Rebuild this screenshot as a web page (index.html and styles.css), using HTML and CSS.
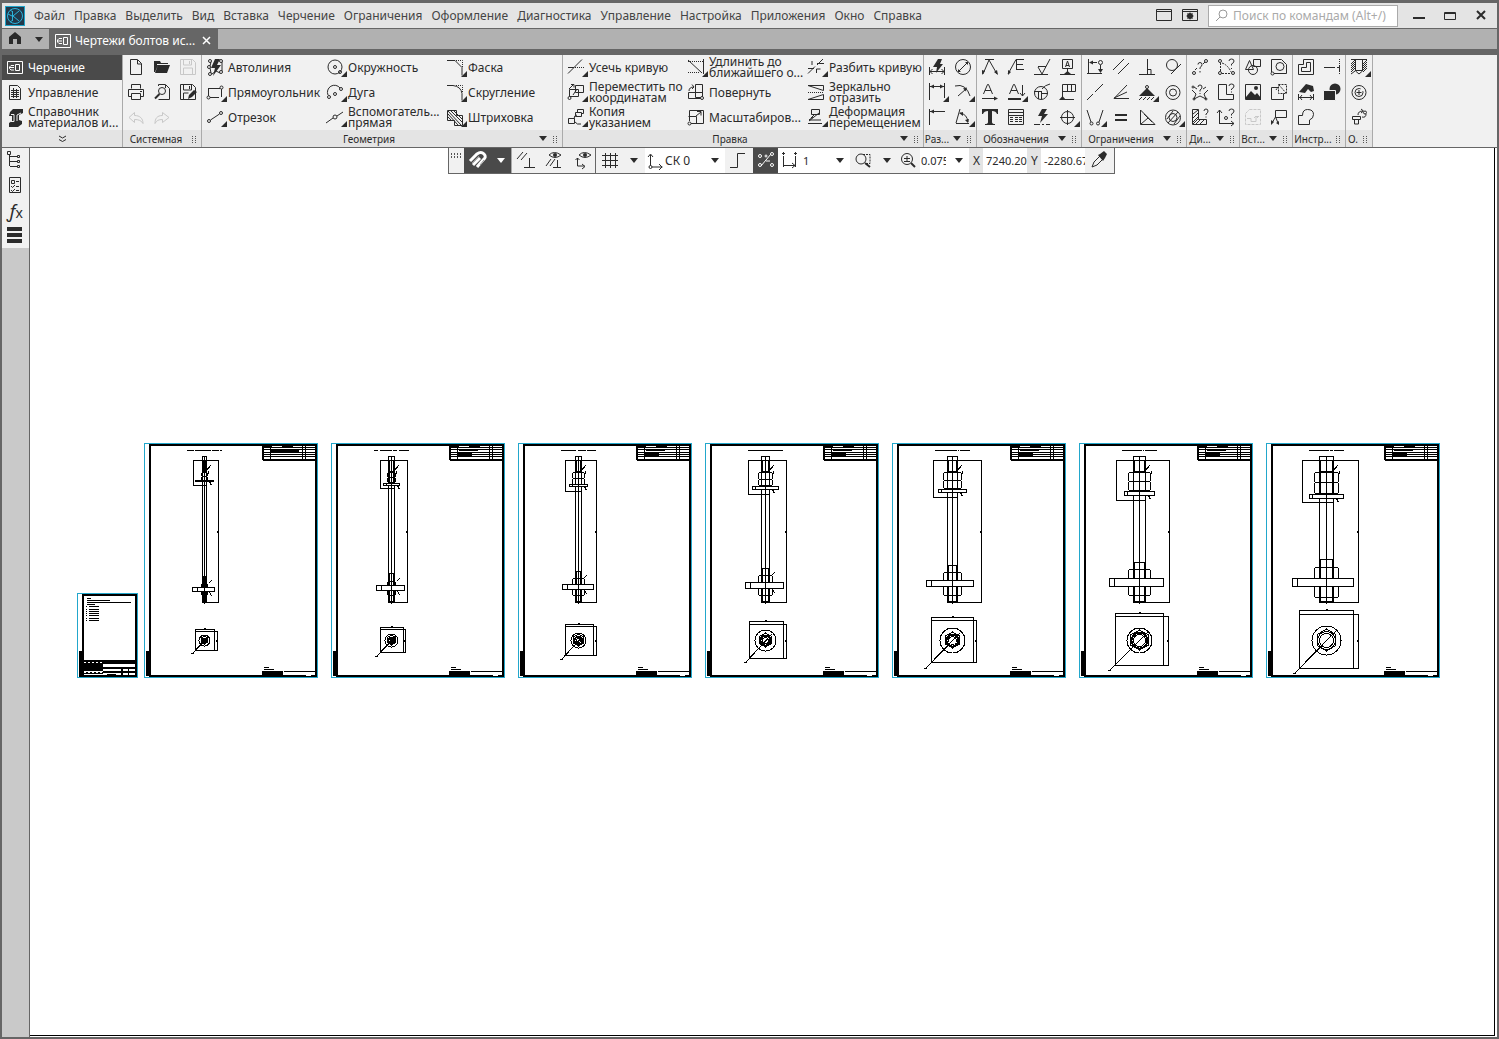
FILE: index.html
```html
<!DOCTYPE html>
<html lang="ru">
<head>
<meta charset="utf-8">
<title>Чертежи болтов</title>
<link rel="stylesheet" href="styles.css">
</head>
<body>
<div class="app">
<header class="menubar">
  <svg class="logo" width="20" height="20" viewBox="0 0 20 20"><path d="M0 0h20v20H0z" fill="#1fa3c8"/><path d="M1 1h18v18H1z" fill="#22384a"/><g fill="none" stroke="#2bb4dc"><circle cx="10" cy="10" r="7.5"/><path d="M7.500 5v10M8 10l6-5M8 10l6 5M3 8l4 2M5 4l3 2M5 16l3-2" /></g></svg>
  <nav class="menu">
    <button>Файл</button><button>Правка</button><button>Выделить</button><button>Вид</button><button>Вставка</button><button>Черчение</button><button>Ограничения</button><button>Оформление</button><button>Диагностика</button><button>Управление</button><button>Настройка</button><button>Приложения</button><button>Окно</button><button>Справка</button>
  </nav>
  <div class="menubar-right">
    <button class="ic" aria-label="Экран"><svg viewBox="0 0 26 25"><path d="M5.500 6.500h15v11h-15zM5 8.500h16"/></svg></button>
    <button class="ic" aria-label="Настройка экрана"><svg viewBox="0 0 26 25"><path d="M5.500 6.500h15v11h-15zM5 8.500h16"/><circle cx="13" cy="13" r="2" stroke-width="2"/><path d="M13 9.500v7M9.500 13h7M10.500 10.500l5 5M15.500 10.500l-5 5"/></svg></button>
    <label class="search"><svg width="14" height="14" viewBox="0 0 14 14"><circle cx="8" cy="5" r="4"/><path d="M5 8l-4 4"/></svg><input type="text" placeholder="Поиск по командам (Alt+/)" aria-label="Поиск по командам"></label>
    <button class="win" aria-label="Свернуть"><svg viewBox="0 0 26 25"><path d="M7 15h12" stroke-width="2"/></svg></button>
    <button class="win" aria-label="Развернуть"><svg viewBox="0 0 26 25"><path d="M7.500 9.500h11v7h-11zM7 10.500h12"/></svg></button>
    <button class="win" aria-label="Закрыть"><svg viewBox="0 0 26 25"><path d="M9 8l8 8M17 8l-8 8" stroke-width="2"/></svg></button>
  </div>
</header>
<div class="tabs">
  <button class="home" aria-label="Главная"><svg viewBox="0 0 26 20"><path class="f" d="M7 8l6-5 6 5v7h-4v-5h-4v5H7z"/></svg></button>
  <button class="home-more" aria-label="Список"><i class="arrow"></i></button>
  <div class="tab">
    <svg width="16" height="14" viewBox="0 0 16 14"><path d="M.5.500h15v13H.5zM7 4.500H4L2.500 6v2L4 9.500h3M3 7h4M8.500 3.500h4v7h-4z"/></svg>
    <span>Чертежи болтов ис...</span>
    <button aria-label="Закрыть вкладку"><svg width="10" height="10" viewBox="0 0 10 10"><path d="M1 1l7 7M8 1L1 8" stroke-width="1.500"/></svg></button>
  </div>
</div>

<div class="ribbon">
  <section class="modes">
    <div class="mode-list">
      <button class="cmd active"><svg viewBox="0 0 26 25"><path d="M5.500 6.500h15v12h-15zM12 10.500H9L7.500 12v1.500L9 15h3M8 12.500h4M13.500 9.500h4v6h-4z"/></svg><span>Черчение</span></button>
      <button class="cmd"><svg viewBox="0 0 26 25"><path d="M7.500 5.500h8l3 3v11h-11z"/><path d="M9 10.500h8M9 12.500h8M9 14.500h8M9 16.500h8M11.500 8v10M14.500 9v9"/></svg><span>Управление</span></button>
      <button class="cmd"><svg viewBox="0 0 26 25"><path class="f" d="M8 7l3-3h10v4l-4 2v5l3 1v3l-4 3H7v-4l3-2v-5H7z"/><path d="M9 9.500h3v7H9M19 8l-4 2v6" stroke="#f1f1f1"/></svg><span>Справочник<br>материалов и...</span></button>
    </div>
    <footer><button class="more" aria-label="Ещё"><svg width="9" height="8" viewBox="0 0 9 8"><path d="M1 1l3.500 2L8 1M1 4.500l3.500 2 3.500-2"/></svg></button></footer>
  </section>

  <section>
    <div class="grid c3">
      <button class="ic" aria-label="Создать"><svg viewBox="0 0 26 25"><path d="M7.500 4.500h7l4 4v11h-11zM14.500 5v4h4"/></svg></button>
      <button class="ic" aria-label="Открыть"><svg viewBox="0 0 26 25"><path class="f" d="M5 6h6l1 2h7v2H9l-3 7H5zM9 10h12l-3 8H6z"/><path d="M8 9.500h12" stroke="#f1f1f1"/></svg></button>
      <button class="ic off" aria-label="Сохранить"><svg viewBox="0 0 26 25"><path d="M5.500 4.500h12l3 3v12h-15zM8.500 5v5h8V5M8.500 19v-6h9v6M14.500 6v3"/></svg></button>
      <button class="ic" aria-label="Печать"><svg viewBox="0 0 26 25"><path d="M8.500 8.500v-4h9v4M8.500 16.500h-3v-7h15v7h-3M8.500 13.500h9v6h-9zM17 11.500h2"/></svg></button>
      <button class="ic" aria-label="Просмотр"><svg viewBox="0 0 26 25"><path d="M9.500 6V4.500h7l4 4v11h-11M16.500 5v3"/><circle cx="13" cy="11" r="3.500"/><path d="M10.500 14L6 18.500" stroke-width="2"/></svg></button>
      <button class="ic" aria-label="Сохранить как"><svg viewBox="0 0 26 25"><path d="M5.500 4.500h12l3 3v12h-15zM8.500 5v5h8V5M8.500 19v-6h5M14.500 6v3"/><path d="M13 19l1-4 5-5 3 2-5 5z" class="f"/></svg></button>
      <button class="ic off" aria-label="Отменить"><svg viewBox="0 0 26 25"><path d="M11.500 7.500L6 12.500l5.500 5v-3c4 0 7 1 8.500 4 0-5-3-8-8.500-8z"/></svg></button>
      <button class="ic off" aria-label="Повторить"><svg viewBox="0 0 26 25"><path d="M13.500 7.500l6.500 5-6.500 5v-3c-4 0-6 1-7.500 4 0-5 2-8 7.500-8z"/></svg></button>
    </div>
    <footer><span>Системная</span><i class="grip"></i></footer>
  </section>

  <section>
    <div class="grid t3">
      <button class="cmd"><svg viewBox="0 0 26 25"><path class="f" d="M13 4h5l-3 6h4l-8 11 2-8H9z"/><circle cx="8" cy="6" r="1.500"/><circle cx="7" cy="12" r="1.500"/><circle cx="8" cy="19" r="1.500"/><circle cx="19" cy="6" r="1.500"/><circle cx="19" cy="17" r="1.500"/><path d="M9 7l-1 4M8 13l1 5M20 7v9M10 19l4-3 4 2"/></svg><span>Автолиния</span></button>
      <button class="cmd fly"><svg viewBox="0 0 26 25"><circle cx="13" cy="12" r="7"/><circle cx="13" cy="12" r="1.500"/><circle cx="18" cy="17" r="1.500"/></svg><span>Окружность</span></button>
      <button class="cmd fly"><svg viewBox="0 0 26 25"><path d="M5 5.500h8l7 7v8"/><path d="M14 5.500h6.500v7" stroke-dasharray="1 1"/></svg><span>Фаска</span></button>
      <button class="cmd fly"><svg viewBox="0 0 26 25"><path d="M6 8.500h12M19.500 9v8M17 17.500H8M6.500 9v7"/><circle cx="19.500" cy="7.500" r="1.500"/><circle cx="6.500" cy="17.500" r="1.500"/></svg><span>Прямоугольник</span></button>
      <button class="cmd fly"><svg viewBox="0 0 26 25"><path d="M6 15a7 7 0 0 1 12-7"/><circle cx="7" cy="17" r="1.500"/><circle cx="19" cy="9" r="1.500"/><circle cx="13" cy="14" r="1.500"/></svg><span>Дуга</span></button>
      <button class="cmd fly"><svg viewBox="0 0 26 25"><path d="M5 5.500h6q8 1 9 8v7"/><path d="M14 5.500h6.500v7" stroke-dasharray="1 1"/></svg><span>Скругление</span></button>
      <button class="cmd fly"><svg viewBox="0 0 26 25"><circle cx="7" cy="16" r="1.500"/><circle cx="19" cy="8" r="1.500"/><path d="M8.500 15l9-6"/></svg><span>Отрезок</span></button>
      <button class="cmd fly"><svg viewBox="0 0 26 25"><path d="M4 18l7-5M15 11l6-4"/><circle cx="13" cy="12" r="2"/></svg><span>Вспомогатель...<br>прямая</span></button>
      <button class="cmd fly"><svg viewBox="0 0 26 25"><path d="M5.500 5.500h9v5h6v10h-8v-5h-7z"/><path d="M6 12l4 4M6 9l10 11M6 6l13 14M9 6l11 11M12 6l8 8"/></svg><span>Штриховка</span></button>
    </div>
    <footer><span>Геометрия</span><button class="drop" aria-label="Геометрия: ещё"><i class="arrow"></i></button><i class="grip"></i></footer>
  </section>

  <section>
    <div class="grid t3">
      <button class="cmd fly"><svg viewBox="0 0 26 25"><path d="M5 18.500L19 4.500M5 12.500h6"/><path d="M12 12.500h9" stroke-dasharray="1 1"/></svg><span>Усечь кривую</span></button>
      <button class="cmd fly"><svg viewBox="0 0 26 25"><path d="M20.500 4v15M5 5l14 13"/><path d="M5 6.500h15M5 17.500h12" stroke-dasharray="1 1"/></svg><span>Удлинить до<br>ближайшего о...</span></button>
      <button class="cmd fly"><svg viewBox="0 0 26 25"><path d="M5 18.500l7-7M14 10l6-6M5 13.500h6M14 8.500h7M13.500 18v-4h4M9 10V6"/></svg><span>Разбить кривую</span></button>
      <button class="cmd fly"><svg viewBox="0 0 26 25"><path d="M12.500 5.500h8v7h-8zM6.500 9.500h9v7h-9zM10 15l4-6"/><path d="M6 9l5-5M8 4.500h3v3"/><circle cx="6.500" cy="18" r="1.500"/></svg><span>Переместить по<br>координатам</span></button>
      <button class="cmd"><svg viewBox="0 0 26 25"><path d="M12.500 4.500h7v13h-7zM5.500 12.500h14v6h-14zM6 11q0-4 5-4M9 4.500l2 2.500-2 2"/><circle cx="19" cy="18" r="1.500" fill="#f1f1f1"/></svg><span>Повернуть</span></button>
      <button class="cmd"><svg viewBox="0 0 26 25"><path d="M5 5.500h15.500v5zM5 19.500h15.500v-5z"/><path d="M5 12.500h16" stroke-dasharray="1 1"/></svg><span>Зеркально<br>отразить</span></button>
      <button class="cmd fly"><svg viewBox="0 0 26 25"><path d="M12.500 7.500h6v4h-6zM14.500 7V4.500h6v4H19M5.500 13.500h6v5h-6zM11 14q0-4 3-4M12 17q2 3 6 2"/></svg><span>Копия<br>указанием</span></button>
      <button class="cmd"><svg viewBox="0 0 26 25"><path d="M6.500 16V5.500h14v13H8M5.500 11.500h8v7h-5M13 11l5-4M14 6.500h4v4"/><circle cx="6.500" cy="18.500" r="1.500" fill="#f1f1f1"/></svg><span>Масштабиров...</span></button>
      <button class="cmd fly"><svg viewBox="0 0 26 25"><path d="M8.500 4.500h8v5h-8zM10 12l-4 3h12M5 18.500h14M8 13l3-3M6 16l10-8"/></svg><span>Деформация<br>перемещением</span></button>
    </div>
    <footer><span>Правка</span><button class="drop" aria-label="Правка: ещё"><i class="arrow"></i></button><i class="grip"></i></footer>
  </section>

  <section>
    <div class="grid c2">
      <button class="ic" aria-label="Авторазмер"><svg viewBox="0 0 26 25"><path d="M5.500 12v8M20.500 12v8M6 16.500h14M8.500 14L6 16.500 8.500 19M17.500 14l2.500 2.500-2.500 2.500"/><path class="f" d="M14 4h4l-2 5h3l-7 9 1-6h-4z"/></svg></button>
      <button class="ic" aria-label="Диаметральный размер"><svg viewBox="0 0 26 25"><circle cx="13" cy="12" r="7.500"/><path d="M8 17L18 7"/><path class="f" d="M8 17v-3l3 3zM18 7v3l-3-3z"/></svg></button>
      <button class="ic fly" aria-label="Линейный размер"><svg viewBox="0 0 26 25"><path d="M5.500 3v17M20.500 3v15M6 6.500h14"/><path class="f" d="M6 6.500l4-2v4zM20 6.500l-4-2v4z"/></svg></button>
      <button class="ic fly" aria-label="Радиальный размер"><svg viewBox="0 0 26 25"><path d="M5 6q11-3 15 10M8 16l8-7"/><path class="f" d="M17 7.500l-1 4-3-3z"/></svg></button>
      <button class="ic" aria-label="Размер с обрывом"><svg viewBox="0 0 26 25"><path d="M5.500 4v16M6 6.500h15"/><path class="f" d="M6 6.500l4-2v4z"/></svg></button>
      <button class="ic fly" aria-label="Угловой размер"><svg viewBox="0 0 26 25"><path d="M6 18.500h13M6 18L10 4M10 8q7 1 8 9"/><path class="f" d="M9 8l4-1v4zM18 18l-3-3 4-1z"/></svg></button>
    </div>
    <footer><span>Раз...</span><button class="drop" aria-label="Размеры: ещё"><i class="arrow"></i></button><i class="grip"></i></footer>
  </section>

  <section>
    <div class="grid c4">
      <button class="ic" aria-label="Линия-выноска"><svg viewBox="0 0 26 25"><path d="M8 4.500h9M6 19l6-14 8 14"/><path class="f" d="M5 20v-5l3 1zM21 20l-4-3 3-2z"/></svg></button>
      <button class="ic" aria-label="Позиция"><svg viewBox="0 0 26 25"><path d="M5 19l8-14.500h8M13.500 5v9M13 9.500h7M13 14.500h8"/><path class="f" d="M5 20v-5l3 2z"/></svg></button>
      <button class="ic" aria-label="Шероховатость"><svg viewBox="0 0 26 25"><path d="M5 19.500h14M9 11.500h8M9 12l4 7 8-15"/></svg></button>
      <button class="ic" aria-label="База"><svg viewBox="0 0 26 25"><path d="M7.500 4.500h10v9h-10zM12.500 14v5M10.500 12l2-6 2 6M11 10.500h3"/><path d="M5 19.500h15"/><path class="f" d="M9 19l3.500-3 3.500 3z"/></svg></button>
      <button class="ic" aria-label="Стрелка вида"><svg viewBox="0 0 26 25"><path d="M6.500 14l4-9.500h1l4 9.500M8 10.500h6M5 18.500h15"/><path class="f" d="M21 18.500l-4-2v4z"/></svg></button>
      <button class="ic fly" aria-label="Линия разреза"><svg viewBox="0 0 26 25"><path d="M6.500 14l4-9.500h1l4 9.500M8 10.500h6M19.500 5v11M17 13l2.500 3 2.500-3"/><path d="M5 19h13" stroke-width="2"/></svg></button>
      <button class="ic" aria-label="Выносной элемент"><svg viewBox="0 0 26 25"><circle cx="12" cy="13" r="6.500"/><path d="M5 11.500h8M9.500 12v7M12.500 12v7M13 13.500h6M13 9q3-4 8-5"/></svg></button>
      <button class="ic" aria-label="Допуск формы"><svg viewBox="0 0 26 25"><path d="M7.500 20V4.500h13v7h-13M12.500 5v7M16.500 5v7M5 19.500h14"/><path class="f" d="M4 20l3.500-4 3.500 4z"/></svg></button>
      <button class="ic" aria-label="Надпись"><svg viewBox="0 0 26 25"><path class="f" d="M5 4h16v5h-1q-1-3-5-3v11q0 2 3 2v1H8v-1q3 0 3-2V6q-4 0-5 3H5z"/></svg></button>
      <button class="ic" aria-label="Таблица"><svg viewBox="0 0 26 25"><path d="M5.500 4.500h15v15h-15zM5 7.500h16M5 10.500h16M7 12.500h3M7 14.500h3M7 16.500h3M12 12.500h3M12 14.500h3M12 16.500h3M16 12.500h3M16 14.500h3M16 16.500h3"/></svg></button>
      <button class="ic" aria-label="Условные обозначения"><svg viewBox="0 0 26 25"><path class="f" d="M13 4h5l-3 5h4l-8 9 2-7H9z"/><path d="M5 19.500h6M13 19.500h2M17 19.500h4"/></svg></button>
      <button class="ic fly" aria-label="Обозначение центра"><svg viewBox="0 0 26 25"><circle cx="12.500" cy="12.500" r="6"/><path d="M12.500 5v15M5 12.500h15"/></svg></button>
    </div>
    <footer><span>Обозначения</span><button class="drop" aria-label="Обозначения: ещё"><i class="arrow"></i></button><i class="grip"></i></footer>
  </section>

  <section>
    <div class="grid c4">
      <button class="ic" aria-label="Выравнивание"><svg viewBox="0 0 26 25"><path d="M6.500 4v15M5 18.500h15M8 7.500h7M18.500 10v7"/><path class="f" d="M7 7.500l4-2v4zM18.500 18l-2.500-4h5z"/><circle cx="18.500" cy="7.500" r="2"/></svg></button>
      <button class="ic" aria-label="Параллельность"><svg viewBox="0 0 26 25"><path d="M5 15L16 4M10 19L21 8"/></svg></button>
      <button class="ic" aria-label="Перпендикулярность"><svg viewBox="0 0 26 25"><path d="M13.500 4v15M5 19.500h16M14 14.500h3v5"/></svg></button>
      <button class="ic" aria-label="Касание"><svg viewBox="0 0 26 25"><circle cx="12" cy="10" r="5.500"/><path d="M11 19L21 9"/></svg></button>
      <button class="ic" aria-label="Коллинеарность"><svg viewBox="0 0 26 25"><path d="M5 20l6-6M13 12l8-8"/></svg></button>
      <button class="ic" aria-label="Биссектриса"><svg viewBox="0 0 26 25"><path d="M19 5L6 18.500h15M6 18l13-6"/></svg></button>
      <button class="ic fly" aria-label="Фиксация"><svg viewBox="0 0 26 25"><path class="f" d="M13 8l8 8H5z"/><circle cx="13" cy="7" r="1.500"/><path d="M5 20l3-3M9 20l3-3M13 20l3-3M17 20l3-3"/></svg></button>
      <button class="ic" aria-label="Концентричность"><svg viewBox="0 0 26 25"><circle cx="13" cy="12.500" r="7"/><circle cx="13" cy="12.500" r="3.500"/></svg></button>
      <button class="ic fly" aria-label="Симметрия"><svg viewBox="0 0 26 25"><path d="M5 5l4 12M21 5l-4 12"/><circle cx="9.500" cy="18.500" r="1.500"/><circle cx="16" cy="18.500" r="1.500"/></svg></button>
      <button class="ic" aria-label="Равенство"><svg viewBox="0 0 26 25"><path d="M7 10h12M7 15h12" stroke-width="2"/></svg></button>
      <button class="ic" aria-label="Угол"><svg viewBox="0 0 26 25"><path d="M6.500 5v14.500H21zM7 19l7-6M10 9l8 8"/></svg></button>
      <button class="ic fly" aria-label="Штриховка по границе"><svg viewBox="0 0 26 25"><circle cx="13" cy="12.500" r="7.500"/><circle cx="13" cy="12.500" r="4"/><path d="M7 14l6-8M8 18L18 7M14 19l6-8"/></svg></button>
    </div>
    <footer><span>Ограничения</span><button class="drop" aria-label="Ограничения: ещё"><i class="arrow"></i></button><i class="grip"></i></footer>
  </section>

  <section>
    <div class="grid c2">
      <button class="ic" aria-label="Расстояние"><svg viewBox="0 0 26 25"><circle cx="7" cy="18" r="1.500"/><circle cx="19" cy="6" r="1.500"/><path d="M8 15l2-2M16 9l2-2M11 9.500q0-2 2-2t2 2-2 3v1.500M13 16v1.500"/></svg></button>
      <button class="ic" aria-label="Длина кривой"><svg viewBox="0 0 26 25"><circle cx="7" cy="6" r="1.500"/><circle cx="7" cy="18" r="1.500"/><circle cx="20" cy="18" r="1.500"/><path d="M7.500 8v8M9 8q6 2 9 9M9 18.500h9" stroke-dasharray="2 1"/><path d="M16 6q0-2 2.500-2T21 6t-2.500 3v1.500M18.500 13v1"/></svg></button>
      <button class="ic" aria-label="Угол между объектами"><svg viewBox="0 0 26 25"><path d="M7 7l3 2M19 7l-3 2M7 19l2-5-4-4M19 19l-2-5 4-4M7 19l6-3 6 3M11 7q0-2 2-2t2 2-2 3v1.500M13 13v1"/><circle cx="7" cy="19" r="1"/><circle cx="19" cy="19" r="1"/><circle cx="6" cy="7" r="1"/></svg></button>
      <button class="ic" aria-label="Площадь"><svg viewBox="0 0 26 25"><path d="M5.500 4.500h8v10h7v5h-15zM16 6q0-2 2.500-2T21 6t-2.500 3v1M18.500 11.500v1"/></svg></button>
      <button class="ic" aria-label="МЦХ"><svg viewBox="0 0 26 25"><path d="M5.500 4.500h6v10h8v5h-14zM6 9l5-4M6 13l5-5M6 17l5-5M9 19l4-4M13 19l4-4M6 19l5-5M17 6q0-2 2-2t2 2-2 3v1M19 11.500v1"/></svg></button>
      <button class="ic" aria-label="Координаты точки"><svg viewBox="0 0 26 25"><path d="M6.500 19V5M4 8l2.500-3L9 8M6 18.500h15M18 16l3 2.500-3 2.500M16 6q0-2 2.500-2T21 6t-2.500 3v1.500M18.500 12v1"/><circle cx="13" cy="13" r="1.500"/></svg></button>
    </div>
    <footer><span>Ди...</span><button class="drop" aria-label="Диагностика: ещё"><i class="arrow"></i></button><i class="grip"></i></footer>
  </section>

  <section>
    <div class="grid c2">
      <button class="ic" aria-label="Фрагмент"><svg viewBox="0 0 26 25"><path d="M13.500 4.500h7v7h-7zM5.500 14.500l4-9 4 9z"/><circle cx="13" cy="15" r="4.500"/></svg></button>
      <button class="ic" aria-label="Макроэлемент"><svg viewBox="0 0 26 25"><path d="M5.500 17V4.500h10l5 5v9H8"/><circle cx="14" cy="11.500" r="4"/><circle cx="6.500" cy="18.500" r="1.500"/></svg></button>
      <button class="ic" aria-label="Рисунок"><svg viewBox="0 0 26 25"><path d="M5.500 4.500h15v15h-15z"/><path class="f" d="M6 17l5-6 4 4 2-2 4 5v2H6z"/><circle class="f" cx="16" cy="8" r="2"/></svg></button>
      <button class="ic" aria-label="Местный вид"><svg viewBox="0 0 26 25"><path d="M12 7.500H5.500v12h12v-6"/><path d="M12.500 4.500h8v9h-8zM13 5l7 8M10 10l2-3" stroke-dasharray="2 1"/></svg></button>
      <button class="ic off" aria-label="Вид"><svg viewBox="0 0 26 25"><path d="M9.500 4.500h11v15h-15v-11z" stroke-dasharray="3 1"/><path d="M7 13.500h4v3h5v-5h3M14 13l2-2 2 2"/></svg></button>
      <button class="ic" aria-label="Ссылка"><svg viewBox="0 0 26 25"><path d="M9.500 5.500h11v7h-11zM9.500 12L6 18M10 13l2 5"/><path class="f" d="M5 20v-5l3 2zM13 20l-3-2 3-2z"/></svg></button>
    </div>
    <footer><span>Вст...</span><button class="drop" aria-label="Вставка: ещё"><i class="arrow"></i></button><i class="grip"></i></footer>
  </section>

  <section>
    <div class="grid c2">
      <button class="ic" aria-label="Эквидистанта"><svg viewBox="0 0 26 25"><path d="M5.500 9.500h5v-5h10v15h-15z"/><path d="M8.500 12.500h5v-5h4v9h-9z"/></svg></button>
      <button class="ic" aria-label="Осевая линия"><svg viewBox="0 0 26 25"><path d="M5 12.500h11M18 12.500h2"/><path d="M20.500 4v16" stroke-dasharray="1 1"/><path d="M20.500 10v6"/></svg></button>
      <button class="ic" aria-label="Очистка"><svg viewBox="0 0 26 25"><path class="f" d="M6 12l7-8 7 2 1 5-3 1-3-3-3 4z"/><path d="M5.500 14v6M20.500 14v6M6 17.500h14M9 15l-2 2.500L9 20M17 15l2 2.500-2 2.500"/></svg></button>
      <button class="ic" aria-label="Порядок"><svg viewBox="0 0 26 25"><circle class="f" cx="16" cy="9" r="5.500"/><path d="M4.500 10.500h12v10h-12z" fill="#2b2b2b" stroke="#f1f1f1"/></svg></button>
      <button class="ic" aria-label="Контур"><svg viewBox="0 0 26 25"><path d="M5.500 19.500v-9h4q0-6 5-6 6 0 6 5 0 4-4 5.500v4.500z"/></svg></button>
    </div>
    <footer><span>Инстр...</span><i class="grip"></i></footer>
  </section>

  <section>
    <div class="grid c1">
      <button class="ic fly" aria-label="Отверстие"><svg viewBox="0 0 26 25"><path d="M5 4.500h16M9.500 5v11l3.500 3 3.500-3V5M9 15.500h8M5 9l4-4M5 13l4-4M5 17l4-4M17 9l4-4M17 13l4-4M17 17l4-4M5 19l4-3M5 11l4-4M5 15l4-4M17 11l4-4M17 15l4-4"/></svg></button>
      <button class="ic" aria-label="Резьба"><svg viewBox="0 0 26 25"><circle cx="13" cy="12.500" r="7"/><circle cx="13" cy="12.500" r="4" stroke-dasharray="20 3"/><path d="M13 10v5M10.500 12.500h5"/></svg></button>
      <button class="ic" aria-label="Крепёж"><svg viewBox="0 0 26 25"><path d="M6.500 11.500h8v3h-8zM8.500 15v4h4v-4M12 10q0-4 5-4M15 4l2.500 2L15 8M20 9q0 4-4 3"/><circle cx="19" cy="7.500" r="1.500"/></svg></button>
    </div>
    <footer><span>О.</span><i class="grip"></i></footer>
  </section>
</div>

<div class="work">
  <aside class="side">
    <button class="ic" aria-label="Дерево"><svg viewBox="0 0 26 25"><path d="M7.500 6v12M8 8.500h7M8 13.500h7M8 18.500h7"/><path d="M5.500 3.500h3v3h-3zM15.500 7.500h2v2h-2zM15.500 12.500h2v2h-2zM15.500 17.500h2v2h-2z"/></svg></button>
    <button class="ic" aria-label="Параметры"><svg viewBox="0 0 26 25"><path d="M7.500 4.500h11v15h-11zM9.500 7.500h3v3h-3zM14 8.500h3M14 13.500h3M14 17.500h3M9 13l1.500 1.500L13 12M9 17l1.500 1.500L13 16"/></svg></button>
    <button class="ic fx" aria-label="Переменные"><i>ƒ</i><span>x</span></button>
    <button class="ic" aria-label="Список"><svg viewBox="0 0 26 25"><path d="M5 6h15M5 12h15M5 18h15" stroke-width="4"/></svg></button>
  </aside>
  <main class="canvas">
    <div class="sheets" id="sheets"></div>
    <div class="quick">
      <i class="qgrip"></i>
      <button class="dark wide" aria-label="Привязки"><svg viewBox="0 0 26 25"><path d="M6 13l7-7q4-3 7 0t-1 6l-6 7" stroke-width="3"/><path d="M9 17l7-7" stroke-width="3"/><path d="M8 15l7-7M16 17l4-5" stroke="#999"/></svg><i class="arrow"></i></button>
      <span class="seg s1">
        <button class="ic" aria-label="Параллельно"><svg viewBox="0 0 26 25"><path d="M4 11l6-7M8 12l6-7M16.500 10v9M11 19.500h11"/></svg></button>
        <button class="ic" aria-label="Показать ограничения"><svg viewBox="0 0 26 25"><path d="M5 18l5-7M9 18l5-7M16.500 12v7M12 19.500h8M8 7q5-5 12 0-6 5-12 0z"/><circle class="f" cx="14" cy="7" r="2"/></svg></button>
        <button class="ic" aria-label="Показать степени свободы"><svg viewBox="0 0 26 25"><path d="M8.500 10v8h7M6.500 12l2-2 2 2M13 16l3 2.500-3 2.500M10 7q5-5 12 0-6 5-12 0z"/><circle class="f" cx="16" cy="7" r="2"/></svg></button>
      </span>
      <span class="seg s2"><button class="ic" aria-label="Сетка"><svg viewBox="0 0 26 25"><path d="M8.500 5v15M13.500 5v15M18.500 5v15M5 7.500h16M5 12.500h16M5 17.500h16"/></svg></button><button class="qdrop" aria-label="Сетка: ещё"><i class="arrow"></i></button></span>
      <span class="seg white s3"><svg class="qi" viewBox="0 0 20 25"><path d="M5.500 7v12h12M3 9l2.500-3L8 9M14 16l3 3-3 3"/><circle cx="5.500" cy="19" r="1.500" fill="#fff"/></svg><button class="combo">СК 0</button><i class="arrow"></i></span>
      <button class="step" aria-label="Ортогональное черчение"><svg viewBox="0 0 26 25"><path d="M5 19.500h7.500v-14H20"/></svg></button>
      <button class="dark" aria-label="Округление"><svg viewBox="0 0 26 25"><path d="M8 18L18 6M13 13h4"/><circle cx="7" cy="8" r="1.500"/><circle cx="13" cy="8" r="1"/><circle cx="19" cy="6" r="1.500"/><circle cx="7" cy="17" r="1.500"/><circle cx="19" cy="17" r="1.500"/></svg></button>
      <span class="seg white s4"><svg class="qi" viewBox="0 0 20 25"><path d="M4.500 8v11M16.500 8v11M5 17.500h11M13 15l3 2.500-3 2.500M3 5.500h3M4.500 4v3M15 5.500h3M16.500 4v3"/></svg><input class="num" value="1" aria-label="Шаг"><i class="arrow"></i></span>
      <span class="seg s5"><button class="ic" aria-label="Масштаб рамкой"><svg viewBox="0 0 26 25"><circle cx="11" cy="11" r="5"/><path d="M15 15l5 4" stroke-width="2"/><path d="M13 6.500h7v9h-5" stroke-dasharray="2 1"/></svg></button><button class="qdrop" aria-label="Масштаб: ещё"><i class="arrow"></i></button></span>
      <span class="seg s6"><button class="ic" aria-label="Приблизить"><svg viewBox="0 0 26 25"><circle cx="12" cy="11" r="5.500"/><path d="M16 15l4 4" stroke-width="2"/><path d="M12 8v5M9 10.500h6M9 13.500h6"/></svg></button><input class="zoom" value="0.0752" aria-label="Масштаб"><i class="arrow"></i></span>
      <label class="seg coord">X<input value="7240.203" aria-label="Координата X"></label>
      <label class="seg coord">Y<input value="-2280.678" aria-label="Координата Y"></label>
      <button class="pick" aria-label="Копировать свойства"><svg viewBox="0 0 26 25"><path d="M7 19l2-5 6-6 3 3-6 6z"/><path class="f" d="M13 7l2-1 4-3 3 3-2 4-2 3z"/></svg></button>
    </div>
  </main>
</div>
</div>
<script src="sheets.js"></script>
</body>
</html>
```
FILE: styles.css
```css
* { box-sizing: border-box; }
body { margin: 0; font: 12px/16px "Noto Sans", "Open Sans", sans-serif; color: #2b2b2b; }
button { margin: 0; padding: 0; border: 0; background: none; font: inherit; color: inherit; text-align: left; }
input { border: 0; padding: 0; margin: 0; font: inherit; color: inherit; background: none; min-width: 0; }
svg { display: block; flex: none; fill: none; stroke: currentColor; stroke-width: 1; }
.f { fill: currentColor; stroke: none; }
.app { height: 100vh; min-height: 400px; display: flex; flex-direction: column; border: 2px solid #666; border-top-width: 3px; background: #666; }

.menubar { display: flex; align-items: center; height: 25px; background: #e4e4e4; padding-left: 3px; flex: none; }
.logo { stroke: none; }
.menu { display: flex; gap: 9px; margin-left: 9px; white-space: nowrap; flex: 1; color: #444; }
.menubar-right { display: flex; align-items: center; padding-right: 1px; }
.search { display: flex; align-items: center; gap: 4px; width: 190px; height: 22px; margin: 0 5px; padding: 0 6px; background: #fff; border: 1px solid #aaa; color: #999; }
.search input { flex: 1; }
.search input::placeholder { color: #aaa; opacity: 1; }
.win { width: 31px; display: flex; justify-content: center; }
.win svg { width: 26px; height: 25px; }

.tabs { display: flex; height: 26px; margin-top: 1px; flex: none; background: linear-gradient(#b1b1b1 20px, #666 20px); }
.home { width: 26px; height: 20px; }
.home svg { width: 26px; height: 20px; }
.home-more { width: 21px; height: 20px; display: flex; align-items: center; justify-content: center; }
.tab { width: 169px; background: #666; color: #fff; display: flex; align-items: center; padding: 0 6px 3px 6px; gap: 4px; }
.tab span { flex: 1; white-space: nowrap; }
.arrow { display: block; flex: none; width: 8px; border: 4px solid transparent; border-top: 5px solid currentColor; border-bottom: 0; }

.ribbon { display: flex; flex: none; background: #f1f1f1; height: 93px; border-bottom: 1px solid #666; }
.ribbon section { border-right: 1px solid #aaa; flex: none; display: flex; flex-direction: column; }
.ribbon .modes { width: 121px; }
.grid { display: grid; grid-auto-rows: 25px; height: 75px; }
.c1 { grid-template-columns: 26px; }
.c2 { grid-template-columns: repeat(2, 26px); }
.c3 { grid-template-columns: repeat(3, 26px); }
.c4 { grid-template-columns: repeat(4, 26px); }
.t3 { grid-template-columns: repeat(3, 120px); }
.ic, .cmd { position: relative; display: flex; align-items: center; height: 25px; }
.ic { width: 26px; }
.ic svg, .cmd svg { width: 26px; height: 25px; }
.cmd { width: 100%; white-space: nowrap; line-height: 11px; }
.cmd span { padding-bottom: 1px; }
.active { background: #4a4a4a; color: #fff; }
.off { color: #c8c8c8; }
.fly::after { content: ""; position: absolute; left: 19px; top: 16px; border: 3px solid #2b2b2b; border-left-color: transparent; border-top-color: transparent; }
.ribbon footer { flex: 1; display: flex; align-items: center; background: #e4e4e4; font-size: 10px; height: 17px; }
.ribbon footer span { flex: 1; min-width: 0; text-align: center; white-space: nowrap; }
.drop { width: 14px; display: flex; justify-content: center; }
.more { flex: 1; display: flex; justify-content: center; }
.grip { width: 5px; height: 8px; margin: 0 4px 0 3px; background: repeating-linear-gradient(#e4e4e4 0 1px, transparent 1px 2px), repeating-linear-gradient(90deg, #555 0 1px, transparent 1px 3px); }

.work { flex: 1; display: flex; min-height: 0; background: #fff; }
.side { width: 28px; flex: none; background: #c9c9c9; border-right: 1px solid #666; display: flex; flex-direction: column; }
.side .ic { width: 27px; background: #f1f1f1; }
.side .fx { justify-content: center; font-size: 18px; line-height: 20px; }
.fx span { font-size: 14px; padding-top: 5px; }
.canvas { position: relative; flex: 1; min-width: 0; overflow: hidden; margin: 0 2px 1px 0; border-right: 1px solid #000; border-bottom: 1px solid #000; }
.sheets { display: flex; align-items: flex-end; gap: 13px; padding: 295px 0 0 47px; }
.sheets svg { shape-rendering: crispEdges; stroke: #000; border: 1px solid #22a7cc; }
.sheets svg:first-child { margin-right: -7px; }

.quick { position: absolute; left: 418px; top: 0; display: flex; height: 26px; background: #f1f1f1; border: 1px solid #666; border-top: 0; }
.quick svg { width: 26px; height: 25px; }
.quick .qi { width: 20px; }
.qgrip { width: 11px; height: 7px; margin: 4px 2px 0; background: repeating-linear-gradient(#f1f1f1 0 1px, transparent 1px 3px), repeating-linear-gradient(90deg, #555 0 1px, transparent 1px 3px); }
.dark { background: #4a4a4a; color: #fff; display: flex; align-items: center; width: 25px; }
.wide { width: 47px; gap: 7px; }
.seg { display: flex; align-items: center; }
.white { background: #fff; }
.s1 { width: 85px; border-left: 1px solid #aaa; border-right: 1px solid #666; gap: 2px; padding-left: 1px; }
.s2 { width: 49px; gap: 7px; padding-left: 1px; }
.s3 { width: 80px; padding-right: 6px; }
.combo { flex: 1; }
.step { width: 28px; }
.s4 { width: 72px; padding: 0 6px 0 1px; }
.num { flex: 1; padding-left: 4px; }
.s5 { width: 45px; gap: 7px; }
.s6 { width: 74px; background: linear-gradient(90deg, #f1f1f1 25px, #fff 25px); padding-right: 6px; }
.quick input { font-size: 11px; }
.zoom { width: 25px; margin-right: auto; }
.coord { width: 58px; background: #e4e4e4; padding-left: 4px; gap: 3px; }
.coord input { width: 44px; height: 25px; margin-left: auto; background: #fff; padding-left: 3px; }
.pick { width: 29px; }
```
FILE: sheets.js
```javascript
// Per-sheet bolt geometry, in sheet pixels:
// w bolt half width, n nut half width, nut edges, washer, plate, dimension and plan extents.
const bolts = [
  { w: 2, n: 3, nuts: [29, 33, 37], wash: [37, 38, 9], plate: [48, 70, 144, 148], low: [140, 152, 133], left: 49, drop: 42, right: 74, plan: [51, 70, 73, 186, 188, 207], r: 6, hex: 4, end: [48, 210] },
  { w: 3, n: 4, nuts: [29, 34, 39], wash: [40, 42, 8], plate: [45, 73, 142, 147], low: [138, 152, 130], left: 49, drop: 45, right: 76, plan: [49, 72, 74, 184, 186, 209], r: 7, hex: 5, end: [45, 213] },
  { w: 3, n: 6, nuts: [29, 35, 41], wash: [41, 43, 9], plate: [44, 75, 141, 146], low: [135, 152, 128], left: 47, drop: 48, right: 78, plan: [47, 75, 78, 181, 183, 212], r: 8, hex: 6, end: [43, 216] },
  { w: 4, n: 7, nuts: [29, 36, 42], wash: [43, 46, 13], plate: [40, 78, 139, 145], low: [132, 152, 125], left: 43, drop: 51, right: 81, plan: [44, 78, 81, 178, 181, 215], r: 11, hex: 7, end: [40, 219] },
  { w: 5, n: 9, nuts: [29, 37, 45], wash: [46, 49, 14], plate: [34, 81, 137, 143], low: [129, 152, 122], left: 41, drop: 54, right: 89, plan: [39, 81, 84, 174, 177, 219], r: 13, hex: 8, end: [33, 225] },
  { w: 6, n: 11, nuts: [29, 38, 47], wash: [48, 52, 15], plate: [30, 84, 135, 143], low: [126, 152, 119], left: 37, drop: 57, right: 90, plan: [36, 84, 89, 170, 173, 222], r: 13, hex: 10, end: [30, 227] },
  { w: 7, n: 12, nuts: [29, 39, 50], wash: [51, 55, 17], plate: [26, 87, 135, 143], low: [124, 154, 116], left: 36, drop: 59, right: 92, plan: [33, 87, 92, 167, 171, 225], r: 15, hex: 11, end: [28, 230] }
];
const C = 60, PY = 198;
const box = (x1, y1, x2, y2, fill = 'none') =>
  `<path fill="${fill}" d="M${x1 + .5} ${y1 + .5}H${x2 + .5}V${y2 + .5}H${x1 + .5}z"/>`;
const bar = (x, y, w, h) => `<rect x="${x}" y="${y}" width="${w}" height="${h}" fill="#000" stroke="none"/>`;
const seg = (x1, y1, x2, y2) => `<path d="M${x1 + .5} ${y1 + .5}L${x2 + .5} ${y2 + .5}"/>`;
// nut outline with chamfered corners
const nut = (n, y1, y2) =>
  `<path d="M${C - n + 1.5} ${y1 + .5}H${C + n - .5}l1 1V${y2 - .5}l-1 1H${C - n + 1.5}l-1 -1V${y1 + 1.5}z"/>`;

function drawing(b, i) {
  let s = `<path stroke-width="2" d="M6 2h166v231H6z"/>`;
  s += bar(2, 208, 4, 25);
  // table in the upper corner
  s += bar(118, 2, 2, 15) + bar(119, 16, 53, 2) + seg(126, 2, 126, 16) + seg(158, 2, 158, 16) + seg(161, 2, 161, 16);
  for (const y of [4, 6, 9, 11, 13]) s += seg(119, y, 171, y);
  s += bar(127, i ? 10 : 6, i ? 14 : 28, 4) + seg(127, 7, 146, 7) + seg(137, 3, 148, 3) + bar(119, 2, 9, 2);
  // title block and notes
  s += seg(119, 224, 124, 224) + seg(119, 226, 129, 226) + bar(118, 228, 21, 5) + seg(139, 228, 171, 228);
  s += `<rect x="162" y="232" width="5" height="1" fill="#fff" stroke="none"/>`;
  s += `<path stroke-dasharray="${['7 1 16 1', '4 2 12 1', '15 2 8 1', '40 0', '22 1 1 1', '20 1 1 1', '20 1 3 1'][i]}" d="M43 7.5h35"/>`;
  // rod with threaded ends
  s += box(C - b.w, 13, C + b.w, 159) + seg(C, 13, C, 160) + seg(C - b.w, 17, C + b.w, 17);
  s += box(C - b.w + 1, 17, C + b.w - 1, 28) + box(C - b.w + 1, b.low[2], C + b.w - 1, 158);
  s += seg(C - b.w, b.drop, C + b.w, b.drop);
  // nuts, washer, plate
  const [a, m, z] = b.nuts, k = Math.round(b.n / 2);
  s += nut(b.n, a, m) + nut(b.n, m, z) + seg(C - k, a, C - k, z) + seg(C + k, a, C + k, z);
  s += box(C - b.wash[2], b.wash[0], C + b.wash[2], b.wash[1], '#fff') + seg(C - b.wash[2] + 3, b.wash[0], C - b.wash[2] + 3, b.wash[1]);
  s += nut(b.n, b.low[0], b.plate[2]) + nut(b.n, b.plate[3], b.low[1]);
  s += seg(C - k, b.low[0], C - k, b.low[1]) + seg(C + k, b.low[0], C + k, b.low[1]);
  s += box(b.plate[0], b.plate[2], b.plate[1], b.plate[3], '#fff') + seg(b.plate[0] + 5, b.plate[2], b.plate[0] + 5, b.plate[3]);
  s += seg(C, b.wash[0], C, b.wash[1]) + seg(C, b.plate[2], C, b.plate[3]);
  // dimensions
  s += `<path d="M${C - b.w}.5 17.5H${b.left}.5V${b.drop}.5H${C}M${C + b.w} 17.5H${b.right}.5V159.5H${C}"/>`;
  s += bar(b.right - 1, 88, 2, 2) + seg(C + b.w, 27, C + b.w + 4, 22) + seg(C + b.n, 32, C + b.n + 1, 28) + seg(C + b.w + 3, b.wash[1], C + b.w + 5, b.wash[1] + 4);
  if (i < 4) s += seg(C + b.w + 2, b.low[0], C + b.w + 5, b.low[0] - 3) + seg(C + b.w + 3, b.plate[3], C + b.w + 5, b.plate[3] + 5);
  // plan view
  const [px, p2, p3, t1, t2, pb] = b.plan, h = b.hex, q = Math.round(h * .86), y = PY - 1;
  s += `<path d="M${px}.5 ${pb}.5V${t1}.5H${p2}.5V${pb}.5M${px}.5 ${t2}.5H${p3}.5V${pb}.5H${px}.5"/>`;
  s += `<circle cx="${C}.5" cy="${y}.5" r="${b.r - .5}"/><circle cx="${C}.5" cy="${y}.5" r="${h - 2}" stroke-width="${i < 6 ? 2 : 1}"/><circle cx="${C}.5" cy="${y}.5" r="${Math.max(1, h - 4)}"/>`;
  s += `<path d="M${C}.5 ${y - h}l${q} ${h / 2}v${h}l${-q} ${h / 2}l${-q} ${-h / 2}v${-h}z"/>`;
  s += seg(C + q, y - q, b.end[0], b.end[1]) + bar(b.end[0] - 1, b.end[1], 3, 1) + bar(p3 - 1, y, 2, 2) + bar(C, t1 - 1, 2, 1);
  return `<svg width="174" height="235" viewBox="1 1 172 233">${s}</svg>`;
}

function titleSheet() {
  let s = `<path stroke-width="2" d="M6 2h53v81H6z"/>`;
  s += bar(2, 58, 4, 26) + seg(9, 5, 13, 5) + seg(9, 7, 32, 7) + seg(9, 9, 53, 9) + seg(9, 11, 17, 11);
  for (const y of [13, 16, 18, 20, 22, 25, 27]) s += bar(9, y, 1, 1) + seg(11, y, 21, y);
  s += bar(6, 67, 53, 4) + bar(6, 71, 20, 7) + bar(26, 74, 33, 2) + bar(6, 79, 20, 2) + bar(26, 78, 33, 2) + bar(44, 75, 2, 9) + seg(51, 75, 51, 83) + bar(30, 81, 9, 2);
  s += `<path stroke="#fff" stroke-dasharray="2 2" d="M7 69.5h18M7 79.5h18"/>`;
  return `<svg width="61" height="85" viewBox="1 1 59 83">${s}</svg>`;
}

document.getElementById('sheets').innerHTML = titleSheet() + bolts.map(drawing).join('');
```
